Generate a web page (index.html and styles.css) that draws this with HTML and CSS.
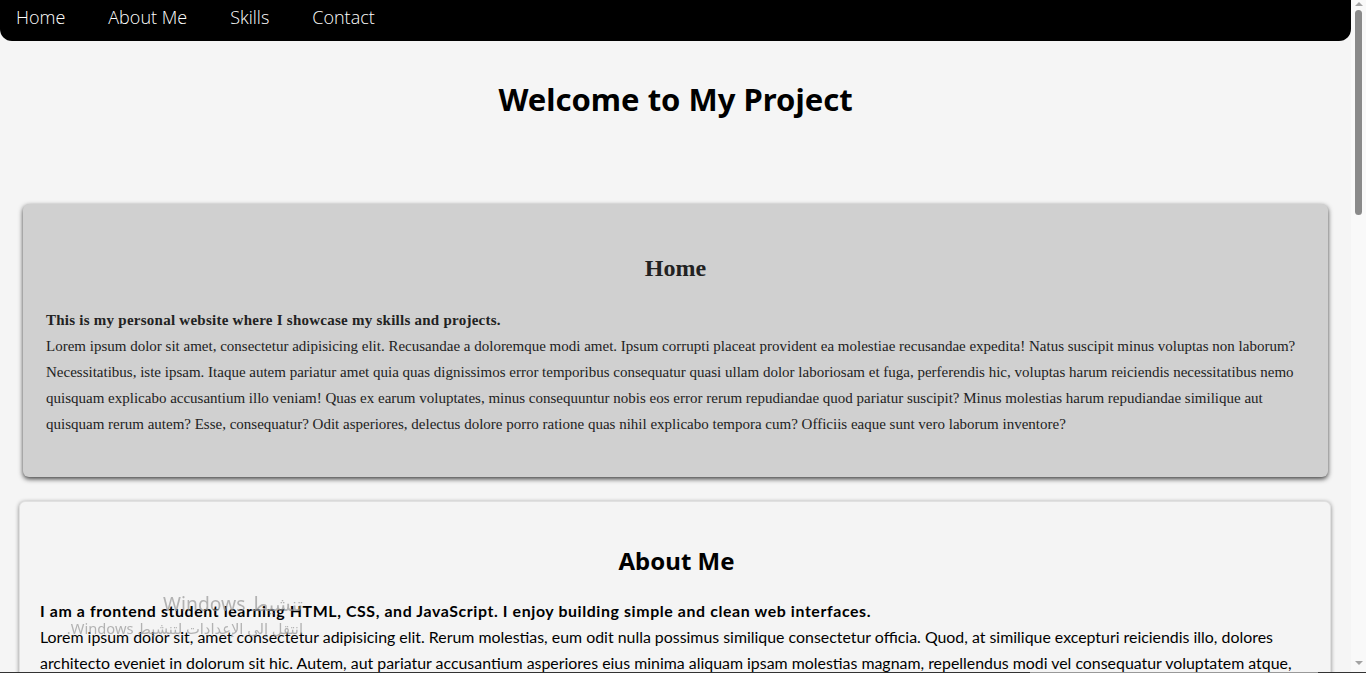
FILE: index.html
```html
<!DOCTYPE html>
<html lang="en">
<head>
<meta charset="utf-8">
<title>My Project</title>
<link rel="stylesheet" href="styles.css">
</head>
<body>
<nav class="nav">
  <ul class="nav-list">
    <li><a class="nav-link" href="#home">Home</a></li>
    <li><a class="nav-link" href="#about">About Me</a></li>
    <li><a class="nav-link" href="#skills">Skills</a></li>
    <li><a class="nav-link" href="#contact">Contact</a></li>
  </ul>
</nav>

<h1 class="title">Welcome to My Project</h1>

<section class="card card-home" id="home">
  <h2 class="card-title serif">Home</h2>
  <p class="card-text serif"><strong>This is my personal website where I showcase my skills and projects.</strong><br>Lorem ipsum dolor sit amet, consectetur adipisicing elit. Recusandae a doloremque modi amet. Ipsum corrupti placeat provident ea molestiae recusandae expedita! Natus suscipit minus voluptas non laborum? Necessitatibus, iste ipsam. Itaque autem pariatur amet quia quas dignissimos error temporibus consequatur quasi ullam dolor laboriosam et fuga, perferendis hic, voluptas harum reiciendis necessitatibus nemo quisquam explicabo accusantium illo veniam! Quas ex earum voluptates, minus consequuntur nobis eos error rerum repudiandae quod pariatur suscipit? Minus molestias harum repudiandae similique aut quisquam rerum autem? Esse, consequatur? Odit asperiores, delectus dolore porro ratione quas nihil explicabo tempora cum? Officiis eaque sunt vero laborum inventore?</p>
</section>

<section class="card card-about" id="about">
  <h2 class="card-title sans">About Me</h2>
  <p class="card-text sans"><strong>I am a frontend student learning HTML, CSS, and JavaScript. I enjoy building simple and clean web interfaces.</strong><br>Lorem ipsum dolor sit, amet consectetur adipisicing elit. Rerum molestias, eum odit nulla possimus similique consectetur officia. Quod, at similique excepturi reiciendis illo, dolores architecto eveniet in dolorum sit hic. Autem, aut pariatur accusantium asperiores eius minima aliquam ipsam molestias magnam, repellendus modi vel consequatur voluptatem atque, quibusdam nostrum. Eveniet, fugit. Officia, dolorum magni natus illo sit consequuntur quam.</p>
</section>

<section class="card card-about" id="skills">
  <h2 class="card-title sans">Skills</h2>
  <p class="card-text sans">HTML, CSS, JavaScript</p>
</section>

<div class="scrollbar" aria-hidden="true">
  <div class="scroll-thumb"></div>
</div>

<div class="watermark" dir="rtl">
  <div class="wm-big">تنشيط Windows</div>
  <div class="wm-small">انتقل إلى الإعدادات لتنشيط Windows.</div>
</div>
<div class="taskbar-edge"></div>
</body>
</html>
```

FILE: styles.css
```css
html {
  background: #f5f5f5;
}
body {
  margin: 0 15px 0 0;
  background: #f5f5f5;
  font-family: "Lato", "Open Sans", sans-serif;
  color: #000;
}
.nav {
  background: #000;
  height: 41px;
  border-radius: 0 0 12px 12px;
}
.nav-list {
  list-style: none;
  margin: 0;
  padding: 0 0 0 16px;
  display: flex;
  gap: 43px;
  height: 41px;
  align-items: center;
}
.nav-link {
  color: #fff;
  text-decoration: none;
  font-family: "Open Sans", sans-serif;
  font-weight: 300;
  font-size: 18px;
  position: relative;
  top: -4px;
}
.title {
  text-align: center;
  font-family: "Noto Sans", sans-serif;
  font-weight: 700;
  font-size: 31px;
  line-height: 39px;
  margin: 39px 0 85px;
}
.card {
  border-radius: 6px;
}
.card-home {
  margin: 0 23px;
  background: #d0d0d0;
  padding: 31px 23px 40px;
  box-shadow: 0 2px 5px rgba(0, 0, 0, 0.75);
}
.card-about {
  margin: 24px 20px 0 19px;
  background: #f4f4f4;
  border: 1px solid #e0e0e0;
  padding: 22px 20px 40px;
  box-shadow: 0 1px 4px rgba(0, 0, 0, 0.45);
}
.serif {
  font-family: "Liberation Serif", serif;
}
.card-title {
  text-align: center;
  margin: 20px 0 0;
}
.card-title.serif {
  font-size: 24px;
  color: #222;
}
.card-title.sans {
  font-family: "Noto Sans", sans-serif;
  font-size: 24px;
  font-weight: 700;
  padding-left: 3px;
}
.card-text {
  margin: 25px 0 0;
  line-height: 26px;
}
.card-text.serif {
  font-size: 15px;
  color: #222;
}
.card-text.serif strong {
  letter-spacing: 0.25px;
}
.card-text.sans {
  margin-top: 21px;
  font-size: 15.9px;
  font-weight: 400;
}
.card-text.sans strong {
  letter-spacing: 0.6px;
}
.scrollbar {
  position: fixed;
  top: 0;
  right: 0;
  width: 15px;
  height: 100vh;
  background: #f9f9f9;
}
.scrollbar::before,
.scrollbar::after {
  content: "";
  position: absolute;
  left: 4px;
  border-left: 4px solid transparent;
  border-right: 4px solid transparent;
}
.scrollbar::before {
  top: 2px;
  border-bottom: 4px solid #a3a3a3;
}
.scrollbar::after {
  bottom: 8px;
  border-top: 4px solid #a3a3a3;
}
.scroll-thumb {
  margin: 10px 4px 0 4px;
  height: 205px;
  background: #8a8a8a;
  border-radius: 4px;
}
.watermark {
  position: fixed;
  left: 20px;
  top: 590px;
  width: 283px;
  color: rgba(150, 150, 150, 0.7);
  font-family: "Noto Sans", "DejaVu Sans", sans-serif;
  text-align: right;
  pointer-events: none;
}
.wm-big {
  font-size: 19.3px;
  line-height: 28px;
}
.wm-small {
  font-size: 14.7px;
  line-height: 20px;
}
.taskbar-edge {
  position: fixed;
  left: 0;
  right: 0;
  bottom: 0;
  height: 1px;
  background: linear-gradient(to right, #333 0, #333 1030px, #999 1030px, #999 1318px, #333 1318px);
}
```
